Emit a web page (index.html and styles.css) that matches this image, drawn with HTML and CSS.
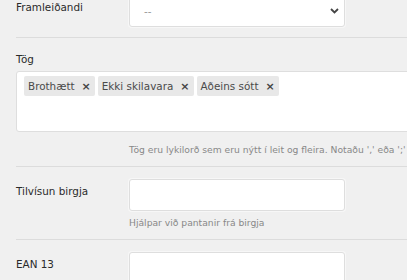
FILE: index.html
```html
<!DOCTYPE html>
<html lang="is">
<head>
    <meta charset="UTF-8">
    <meta name="viewport" content="width=device-width, initial-scale=1.0">
    <title>Vara</title>
    <link rel="stylesheet" href="styles.css">
</head>
<body>
    <div class="form">
        <div class="form-row">
            <label class="form-label">Framleiðandi</label>
            <div class="form-control">
                <div class="select">
                    <span class="select-value">--</span>
                    <svg class="select-arrow" width="9" height="6" viewBox="0 0 9 6">
                        <path d="M1 1 L4.5 4.5 L8 1" fill="none" stroke="#444" stroke-width="1.8"/>
                    </svg>
                </div>
            </div>
        </div>

        <div class="form-row stacked">
            <label class="form-label">Tög</label>
            <div class="tag-box">
                <span class="tag">Brothætt <span class="tag-remove">×</span></span>
                <span class="tag">Ekki skilavara <span class="tag-remove">×</span></span>
                <span class="tag">Aðeins sótt <span class="tag-remove">×</span></span>
            </div>
            <div class="help tag-help">Tög eru lykilorð sem eru nýtt í leit og fleira. Notaðu ',' eða ';'</div>
        </div>

        <div class="form-row">
            <label class="form-label">Tilvísun birgja</label>
            <div class="form-control">
                <input class="input" type="text">
                <div class="help">Hjálpar við pantanir frá birgja</div>
            </div>
        </div>

        <div class="form-row">
            <label class="form-label">EAN 13</label>
            <div class="form-control">
                <input class="input" type="text">
            </div>
        </div>
    </div>
</body>
</html>
```

FILE: styles.css
```css
html, body {
    margin: 0;
    padding: 0;
    overflow: hidden;
    background: #f0f0f0;
}

body {
    font-family: 'DejaVu Sans', Verdana, sans-serif;
    font-size: 10.4px;
    color: #2a2a2a;
}

.form {
    width: 700px;
    margin-top: -17px;
    padding-left: 16px;
}

.form-row {
    display: flex;
    padding: 12px 0 10px;
    border-bottom: 1px solid #dcdcdc;
}

.form-row.stacked {
    display: block;
    padding-top: 14px;
}

.form-label {
    width: 113px;
    flex-shrink: 0;
    padding-top: 5px;
    line-height: 15px;
}

.stacked .form-label {
    display: block;
    padding-top: 0;
    margin-bottom: 4px;
}

.form-control {
    width: 216px;
}

.select,
.input {
    box-sizing: border-box;
    display: flex;
    align-items: center;
    width: 216px;
    height: 32px;
    background: #fff;
    border: 1px solid #dedede;
    border-radius: 3px;
    box-shadow: 0 0 0 1px #f7f7f7;
}

.input {
    display: block;
    margin: 0;
    font: inherit;
}

.select {
    justify-content: space-between;
    padding: 0 5px 0 14px;
}

.select-value {
    color: #999;
}

.tag-box {
    box-sizing: border-box;
    height: 61px;
    background: #fff;
    border: 1px solid #dedede;
    border-radius: 3px;
    padding: 4px 7px;
    display: flex;
    align-items: flex-start;
    gap: 3px;
}

.tag {
    display: inline-flex;
    align-items: center;
    height: 20px;
    padding: 0 4px;
    background: #e8e8e8;
    border-radius: 2px;
    color: #4a4a4a;
}

.tag-remove {
    margin-left: 7px;
    font-weight: bold;
    font-size: 11px;
    color: #444;
}

.help {
    margin-top: 5px;
    font-size: 9.2px;
    line-height: 13px;
    color: #888;
    white-space: nowrap;
}

.tag-help {
    margin-top: 11px;
    margin-left: 113px;
}
```
